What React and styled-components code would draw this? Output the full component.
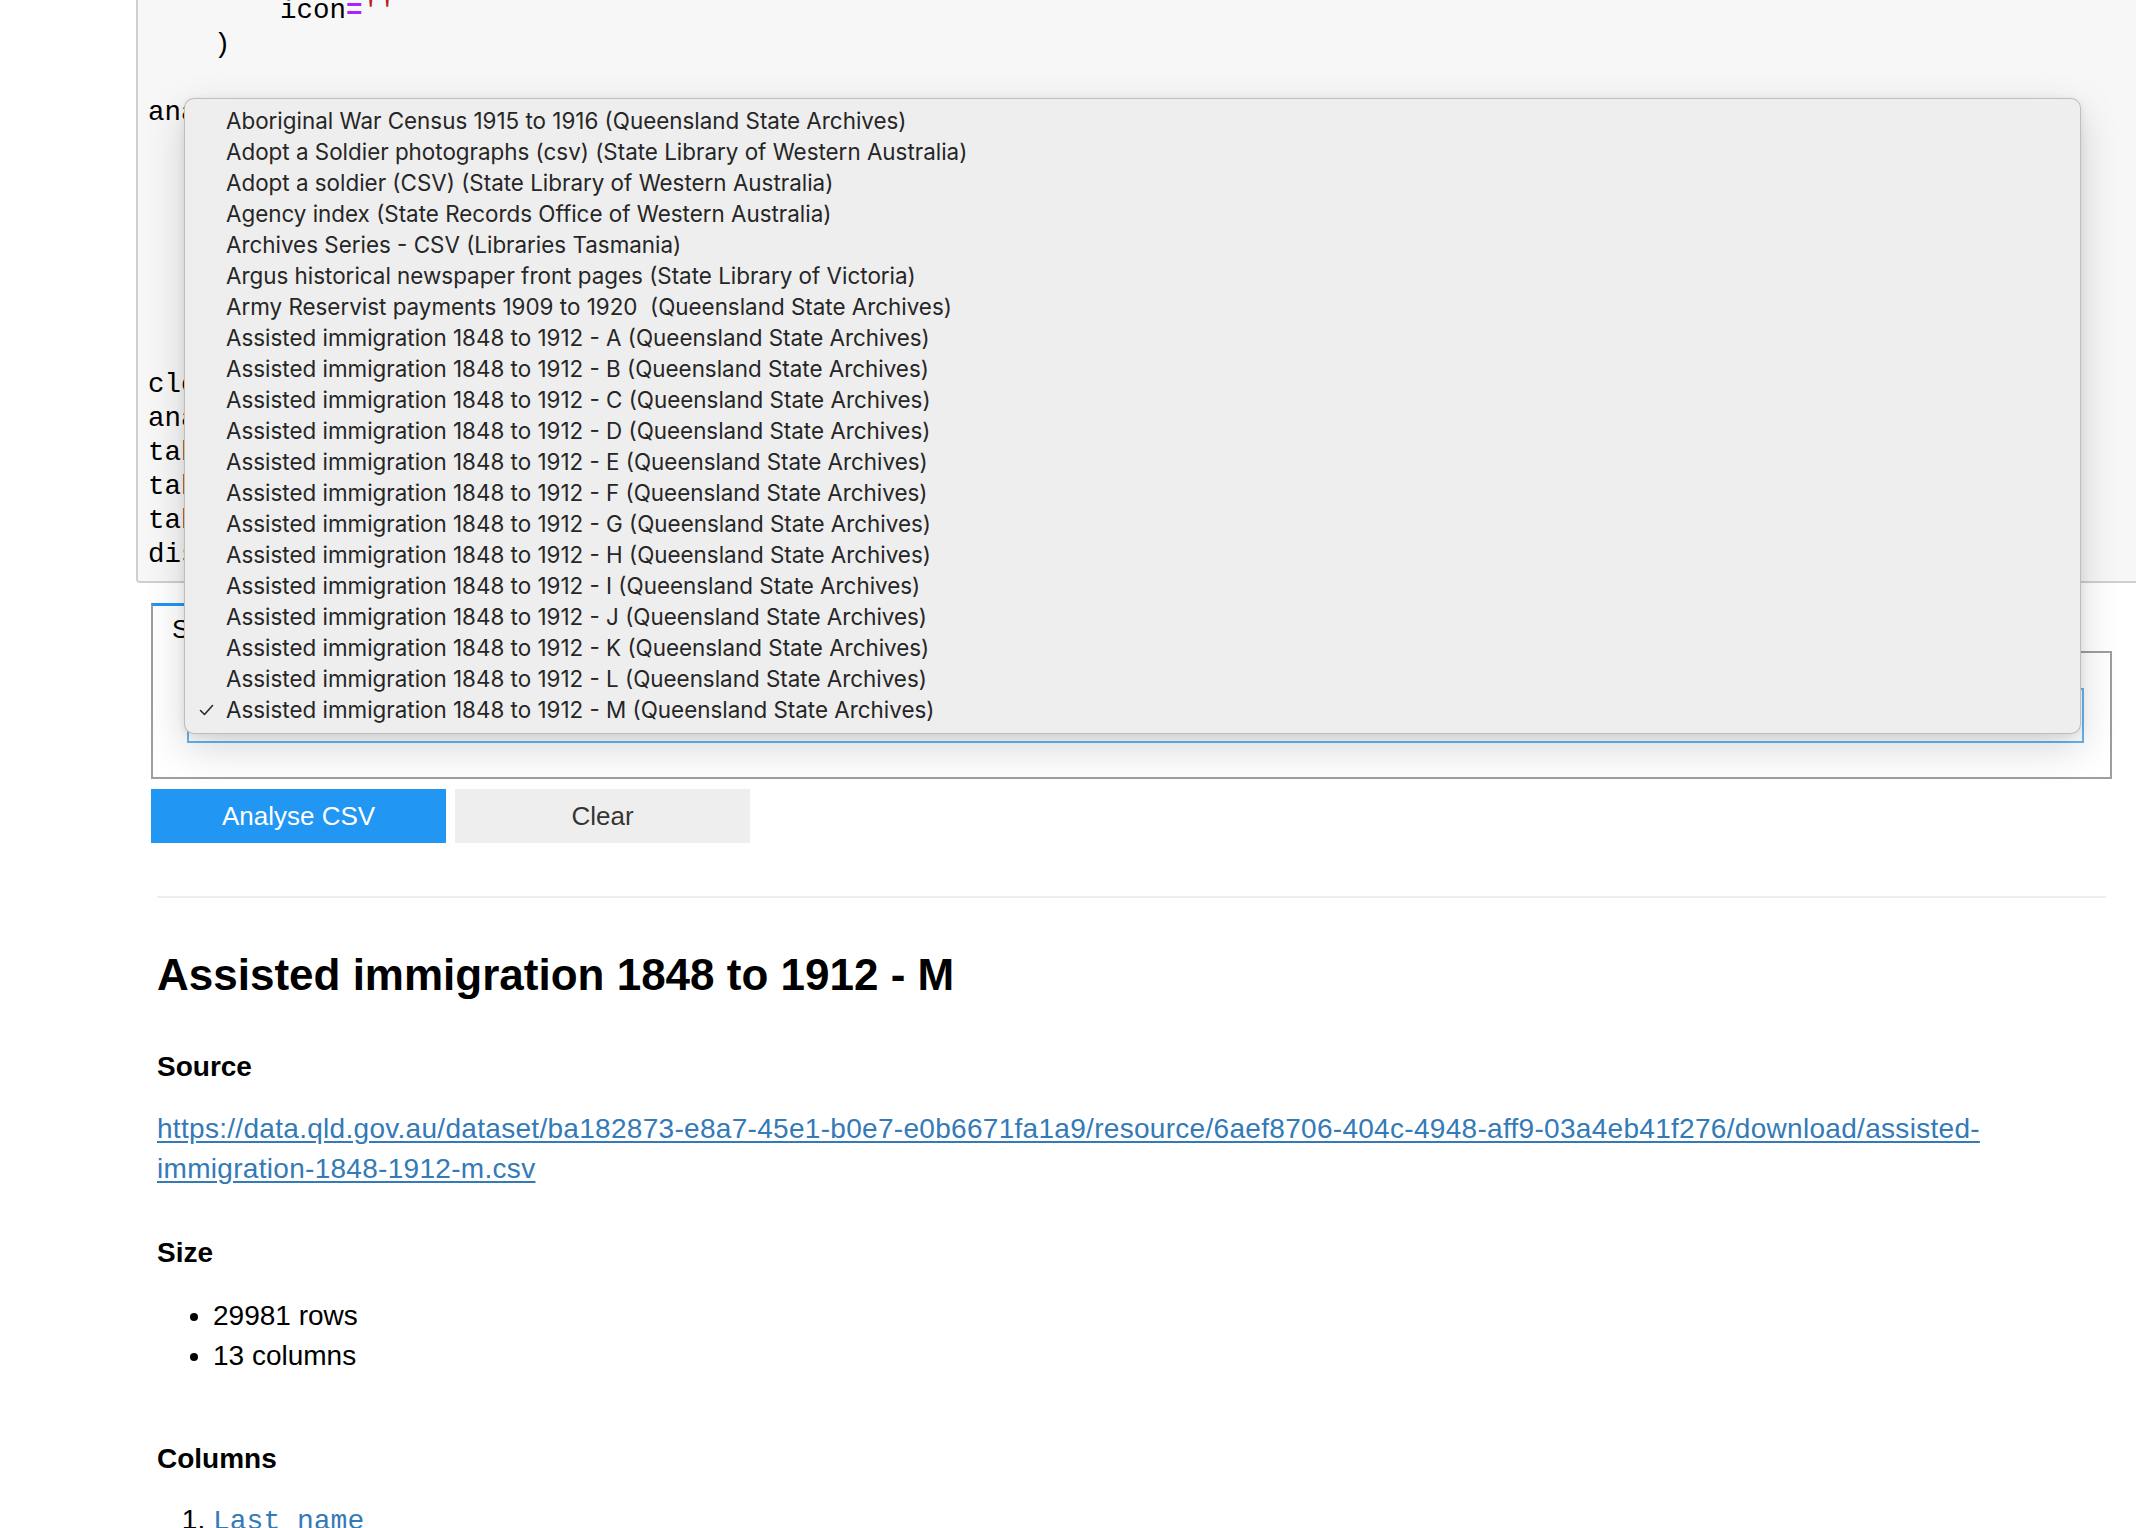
import styled, { createGlobalStyle } from "styled-components";

const GlobalStyle = createGlobalStyle`
  html, body {
    margin: 0;
    padding: 0;
    background: #ffffff;
    overflow: hidden;
  }
  body {
    font-family: "Liberation Sans", Arial, sans-serif;
    color: #000000;
  }
`;

const codeLines = [
  "        tooltip='Clear',",
  "        icon=''",
  "    )",
  "",
  "analyse_button = widgets.Button(",
  "        description='Analyse CSV',",
  "        disabled=False,",
  "        button_style='primary',",
  "        tooltip='Analyse CSV',",
  "        icon=''",
  "    )",
  "",
  "clear_button.on_click(clear_all)",
  "analyse_button.on_click(start_analysis)",
  "tab = widgets.Tab(children=[select_dataset, enter_url, upload_file])",
  "tab.set_title(0, 'Select dataset')",
  "tab.set_title(1, 'Enter a url')",
  "display(tab, widgets.HBox([analyse_button, clear_button]), out)",
];

const datasets = [
  "Aboriginal War Census 1915 to 1916 (Queensland State Archives)",
  "Adopt a Soldier photographs (csv) (State Library of Western Australia)",
  "Adopt a soldier (CSV) (State Library of Western Australia)",
  "Agency index (State Records Office of Western Australia)",
  "Archives Series - CSV (Libraries Tasmania)",
  "Argus historical newspaper front pages (State Library of Victoria)",
  "Army Reservist payments 1909 to 1920  (Queensland State Archives)",
  ..."ABCDEFGHIJKLM".split("").map(
    (letter) =>
      `Assisted immigration 1848 to 1912 - ${letter} (Queensland State Archives)`
  ),
];

const selected = datasets[datasets.length - 1];

const sourceUrl =
  "https://data.qld.gov.au/dataset/ba182873-e8a7-45e1-b0e7-e0b6671fa1a9/resource/6aef8706-404c-4948-aff9-03a4eb41f276/download/assisted-immigration-1848-1912-m.csv";

const highlight = (line) =>
  line.split(/('[^']*'|=|\b(?:False|True)\b|\b\d+\b)/).map((part, i) => {
    if (!part) return null;
    if (part.startsWith("'")) return <Str key={i}>{part}</Str>;
    if (part === "=") return <Op key={i}>{part}</Op>;
    if (part === "False" || part === "True") return <Kw key={i}>{part}</Kw>;
    if (/^\d+$/.test(part)) return <Num key={i}>{part}</Num>;
    return part;
  });

export default function App() {
  return (
    <Page>
      <GlobalStyle />
      <Notebook>
        <CodeCell>
          {codeLines.map((line, index) => (
            <CodeLine key={index}>{highlight(line)}</CodeLine>
          ))}
        </CodeCell>

        <WidgetArea>
          <TabBar>
            <Tab $active>Select dataset</Tab>
            <Tab>Enter a url</Tab>
            <Tab>Upload a file</Tab>
            <TabFiller />
          </TabBar>
          <TabPanel>
            <Select>{selected}</Select>
          </TabPanel>
          <ButtonRow>
            <Button $primary>Analyse CSV</Button>
            <Button>Clear</Button>
          </ButtonRow>
        </WidgetArea>

        <Output>
          <Rule />
          <Title>Assisted immigration 1848 to 1912 - M</Title>
          <SectionHeading $gap={53}>Source</SectionHeading>
          <Paragraph>
            <Link href={sourceUrl}>{sourceUrl}</Link>
          </Paragraph>
          <SectionHeading $gap={49}>Size</SectionHeading>
          <Bullets>
            <li>29981 rows</li>
            <li>13 columns</li>
          </Bullets>
          <SectionHeading $gap={67}>Columns</SectionHeading>
          <Numbered>
            <li>
              <ColumnLink>Last name</ColumnLink>
            </li>
            <li>
              <ColumnLink>Given names</ColumnLink>
            </li>
          </Numbered>
        </Output>
      </Notebook>

      <Menu>
        {datasets.map((name) => (
          <MenuItem key={name}>
            <CheckSlot>
              {name === selected && (
                <svg width="15" height="12" viewBox="0 0 15 12">
                  <polyline
                    points="1.5,6.5 5.5,10.5 13.5,1.5"
                    fill="none"
                    stroke="#2b2b2b"
                    strokeWidth="1.6"
                    strokeLinecap="round"
                    strokeLinejoin="round"
                  />
                </svg>
              )}
            </CheckSlot>
            <span>{name}</span>
          </MenuItem>
        ))}
      </Menu>
    </Page>
  );
}

const Page = styled.div`
  position: relative;
  width: 2136px;
  height: 1528px;
  overflow: hidden;
`;

const Notebook = styled.div`
  padding-left: 136px;
`;

const CodeCell = styled.div`
  margin-top: -50px;
  margin-right: -12px;
  padding: 8px 0 9px 10px;
  background: #f7f7f7;
  border: 2px solid #cfcfcf;
  border-radius: 4px;
  font-family: "Liberation Mono", "Courier New", monospace;
  font-size: 27.5px;
  color: #000000;
`;

const CodeLine = styled.div`
  height: 34px;
  line-height: 34px;
  white-space: pre;
`;

const Str = styled.span`
  color: #ba2121;
`;

const Op = styled.span`
  color: #aa22ff;
  font-weight: bold;
`;

const Kw = styled.span`
  color: #008000;
  font-weight: bold;
`;

const Num = styled.span`
  color: #008000;
`;

const WidgetArea = styled.div`
  width: 1961px;
  margin: 20px 0 0 15px;
`;

const TabBar = styled.div`
  display: flex;
  height: 50px;
`;

const Tab = styled.div`
  flex: 0 0 288px;
  box-sizing: border-box;
  display: flex;
  align-items: center;
  padding-left: 19px;
  margin-right: -2px;
  font-size: 26px;
  color: ${(p) => (p.$active ? "#000000" : "rgba(0, 0, 0, 0.5)")};
  background: ${(p) => (p.$active ? "#ffffff" : "#eeeeee")};
  border: 2px solid #9e9e9e;
  border-top: ${(p) => (p.$active ? "3px solid #2196f3" : "2px solid #9e9e9e")};
  border-bottom: ${(p) => (p.$active ? "none" : "2px solid #9e9e9e")};
  position: relative;
  z-index: ${(p) => (p.$active ? 1 : 0)};
`;

const TabFiller = styled.div`
  flex: 1;
  border-bottom: 2px solid #9e9e9e;
`;

const TabPanel = styled.div`
  padding: 35px 26px 34px 34px;
  border: 2px solid #9e9e9e;
  border-top: none;
`;

const Select = styled.div`
  box-sizing: border-box;
  height: 55px;
  display: flex;
  align-items: center;
  padding-left: 12px;
  background: #ffffff;
  border: 2px solid #64b5f6;
  font-size: 26px;
`;

const ButtonRow = styled.div`
  display: flex;
  gap: 9px;
  margin-top: 10px;
`;

const Button = styled.button`
  width: 295px;
  height: 54px;
  padding: 0;
  border: none;
  font-family: "Liberation Sans", Arial, sans-serif;
  font-size: 26px;
  color: ${(p) => (p.$primary ? "#ffffff" : "rgba(0, 0, 0, 0.8)")};
  background: ${(p) => (p.$primary ? "#2196f3" : "#eeeeee")};
  cursor: pointer;
`;

const Output = styled.div`
  width: 1949px;
  margin-left: 21px;
`;

const Rule = styled.div`
  height: 2px;
  margin-top: 53px;
  background: #eeeeee;
`;

const Title = styled.h2`
  margin: 53px 0 0;
  font-size: 44px;
  line-height: 1.1;
  font-weight: bold;
`;

const SectionHeading = styled.h4`
  margin: ${(p) => p.$gap}px 0 0;
  font-size: 28px;
  line-height: 1.1;
  font-weight: bold;
`;

const Paragraph = styled.p`
  margin: 26px 0 0;
  font-size: 28px;
  line-height: 40px;
`;

const Link = styled.a`
  color: #337ab7;
  letter-spacing: 0.3px;
  text-decoration: underline;
  text-underline-offset: 3px;
`;

const Bullets = styled.ul`
  margin: 27px 0 0;
  padding-left: 2em;
  font-size: 28px;
  line-height: 40.5px;
`;

const Numbered = styled.ol`
  margin: 25px 0 0;
  padding-left: 2em;
  font-size: 28px;
  line-height: 40px;
`;

const ColumnLink = styled.a`
  color: #337ab7;
  font-family: "Liberation Mono", "Courier New", monospace;
  font-size: 28px;
`;

const Menu = styled.div`
  position: absolute;
  z-index: 10;
  left: 184px;
  top: 98px;
  width: 1897px;
  height: 636px;
  box-sizing: border-box;
  padding: 6px 0 10px;
  background: #eeeeee;
  border: 1px solid rgba(0, 0, 0, 0.2);
  border-radius: 10px;
  box-shadow: 0 14px 40px rgba(0, 0, 0, 0.16), 0 2px 8px rgba(0, 0, 0, 0.08);
  font-family: Inter, "Noto Sans", sans-serif;
  font-size: 22.4px;
  color: #262626;
`;

const MenuItem = styled.div`
  height: 31px;
  display: flex;
  align-items: center;
  padding-left: 14px;
  white-space: pre;
`;

const CheckSlot = styled.span`
  width: 27px;
  flex: 0 0 27px;
  display: flex;
  align-items: center;
`;
